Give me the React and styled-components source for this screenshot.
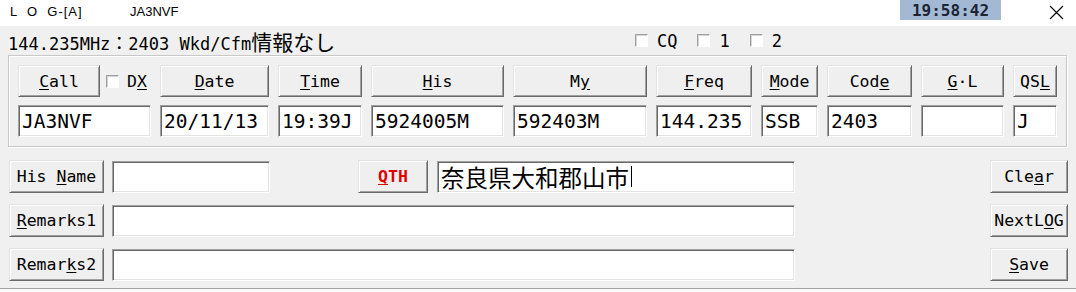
import React from "react";
import styled, { createGlobalStyle } from "styled-components";

const MONO = `"DejaVu Sans Mono", "Noto Sans CJK JP", monospace`;

const Global = createGlobalStyle`
  html, body { margin: 0; padding: 0; background: #f0f0f0; overflow: hidden; }
  * { box-sizing: border-box; }
`;

const Window = styled.div`
  width: 1076px;
  height: 292px;
  display: flex;
  flex-direction: column;
  background: #f0f0f0;
  color: #000;
`;

const TitleBar = styled.header`
  height: 26px;
  flex: none;
  background: #fff;
  display: flex;
  align-items: flex-start;
  padding-right: 5px;
`;

const AppTitle = styled.span`
  width: 120px;
  margin: 4px 0 0 10px;
  font-family: "Liberation Sans", sans-serif;
  font-size: 13px;
  letter-spacing: 1px;
  white-space: pre;
`;

const CallSign = styled.span`
  margin-top: 4px;
  font-family: "Liberation Sans", sans-serif;
  font-size: 13px;
`;

const Spacer = styled.div`
  flex: 1;
`;

const Clock = styled.div`
  width: 101px;
  height: 20px;
  background: #a2b8d3;
  display: flex;
  align-items: center;
  justify-content: center;
  font-family: ${MONO};
  font-weight: 700;
  font-size: 16px;
  color: #1c2433;
`;

const CloseBtn = styled.div`
  width: 30px;
  height: 24px;
  margin-left: 40px;
  display: flex;
  align-items: center;
  justify-content: center;
`;

const InfoRow = styled.div`
  height: 29px;
  flex: none;
  display: flex;
  align-items: center;
  padding-left: 8px;
`;

const InfoText = styled.div`
  width: 627px;
  font-family: ${MONO};
  font-size: 17px;
  white-space: pre;
`;

const Jp = styled.span`
  font-family: "Noto Sans CJK JP", sans-serif;
  font-size: ${(p) => p.$size || 21}px;
`;

const CheckGroup = styled.div`
  display: flex;
  align-items: center;
  gap: 20px;
`;

const CheckItem = styled.div`
  display: flex;
  align-items: center;
  gap: ${(p) => p.$gap ?? 9}px;
  font-family: ${MONO};
  font-size: ${(p) => p.$size || 17}px;
  white-space: pre;
  u { text-underline-offset: 2px; }
`;

const Box = styled.span`
  width: 13px;
  height: 13px;
  flex: none;
  background: #fff;
  border: 1px solid;
  border-color: #a0a0a0 #fff #fff #a0a0a0;
  box-shadow: inset 1px 1px 0 #d4d4d4;
`;

const GroupBox = styled.div`
  margin: 0 9px 0 8px;
  padding: 9px;
  border: 1px solid #c8c8c8;
  box-shadow: inset 1px 1px 0 #fff, 1px 1px 0 #fff;
  display: grid;
  grid-template-columns: 133px 109px 84px 133px 134px 96px 57px 85px 83px 44px;
  grid-template-rows: 32px 32px;
  column-gap: 9px;
  row-gap: 8px;
  flex: none;
`;

const CallCell = styled.div`
  display: flex;
  align-items: center;
  gap: 6px;
`;

const Btn = styled.div`
  width: ${(p) => (p.$w ? `${p.$w}px` : "100%")};
  height: ${(p) => p.$h || 32}px;
  flex: none;
  background: #efefef;
  border: 1px solid;
  border-color: #e3e3e3 #696969 #696969 #e3e3e3;
  box-shadow: inset 1px 1px 0 #fff, inset -1px -1px 0 #a0a0a0;
  display: flex;
  align-items: center;
  justify-content: center;
  font-family: ${MONO};
  font-size: 16.5px;
  font-weight: ${(p) => (p.$red ? 700 : 400)};
  color: ${(p) => (p.$red ? "#e00000" : "#000")};
  white-space: pre;
  u { text-underline-offset: 2px; }
`;

const Field = styled.div`
  width: ${(p) => (p.$w ? `${p.$w}px` : "100%")};
  height: ${(p) => p.$h || 32}px;
  flex: none;
  background: #fff;
  border: 1px solid;
  border-color: #a0a0a0 #fff #fff #a0a0a0;
  box-shadow: inset 1px 1px 0 #696969, inset -1px -1px 0 #e3e3e3;
  padding-left: 3px;
  display: flex;
  align-items: center;
  font-family: ${MONO};
  font-size: 19.5px;
  white-space: pre;
  overflow: hidden;
`;

const Caret = styled.span`
  width: 1px;
  height: 21px;
  margin-left: 2px;
  background: #000;
`;

const Lower = styled.div`
  margin-top: 13px;
  padding: 0 8px 0 9px;
  display: flex;
  justify-content: space-between;
  flex: none;
`;

const Column = styled.div`
  display: flex;
  flex-direction: column;
  gap: 11px;
`;

const Row = styled.div`
  height: 33px;
  display: flex;
  align-items: center;
  gap: 8px;
`;

const QthGroup = styled.div`
  margin-left: 80px;
  display: flex;
  align-items: center;
  gap: 9px;
`;

const Footer = styled.div`
  margin-top: auto;
  height: 4px;
  border-top: 1px solid #a0a0a0;
  background: #fafafa;
`;

const columns = [
  { label: <><u>D</u>ate</>, value: "20/11/13" },
  { label: <><u>T</u>ime</>, value: "19:39J" },
  { label: <><u>H</u>is</>, value: "5924005M" },
  { label: <>M<u>y</u></>, value: "592403M" },
  { label: <><u>F</u>req</>, value: "144.235" },
  { label: <><u>M</u>ode</>, value: "SSB" },
  { label: <>Cod<u>e</u></>, value: "2403" },
  { label: <><u>G</u>·L</>, value: "" },
  { label: <>QS<u>L</u></>, value: "J" },
];

export default function App() {
  return (
    <Window>
      <Global />
      <TitleBar>
        <AppTitle>{"L  O  G-[A]"}</AppTitle>
        <CallSign>JA3NVF</CallSign>
        <Spacer />
        <Clock>19:58:42</Clock>
        <CloseBtn>
          <svg width="15" height="15" viewBox="0 0 15 15">
            <path d="M1 1L14 14M14 1L1 14" stroke="#000" strokeWidth="1.1" fill="none" />
          </svg>
        </CloseBtn>
      </TitleBar>

      <InfoRow>
        <InfoText>
          144.235MHz<Jp $size={18}>：</Jp>2403 Wkd/Cfm<Jp>情報なし</Jp>
        </InfoText>
        <CheckGroup>
          <CheckItem><Box /><span>CQ</span></CheckItem>
          <CheckItem><Box /><span>1</span></CheckItem>
          <CheckItem><Box /><span>2</span></CheckItem>
        </CheckGroup>
      </InfoRow>

      <GroupBox>
        <CallCell>
          <Btn $w={82}><span><u>C</u>all</span></Btn>
          <CheckItem $gap={8} $size={16.5}><Box /><span>D<u>X</u></span></CheckItem>
        </CallCell>
        {columns.map((c, i) => (
          <Btn key={`b${i}`}><span>{c.label}</span></Btn>
        ))}
        <Field>JA3NVF</Field>
        {columns.map((c, i) => (
          <Field key={`f${i}`}>{c.value}</Field>
        ))}
      </GroupBox>

      <Lower>
        <Column>
          <Row>
            <Btn $w={95} $h={33}><span>His <u>N</u>ame</span></Btn>
            <Field $w={158}></Field>
            <QthGroup>
              <Btn $w={70} $h={33} $red><span><u>Q</u>TH</span></Btn>
              <Field $w={358}>
                <Jp $size={23.5}>奈良県大和郡山市</Jp>
                <Caret />
              </Field>
            </QthGroup>
          </Row>
          <Row>
            <Btn $w={95} $h={33}><span><u>R</u>emarks1</span></Btn>
            <Field $w={683}></Field>
          </Row>
          <Row>
            <Btn $w={95} $h={33}><span>Remar<u>k</u>s2</span></Btn>
            <Field $w={683}></Field>
          </Row>
        </Column>
        <Column>
          <Row><Btn $w={78} $h={33}><span>Cle<u>a</u>r</span></Btn></Row>
          <Row><Btn $w={78} $h={33}><span>NextL<u>O</u>G</span></Btn></Row>
          <Row><Btn $w={78} $h={33}><span><u>S</u>ave</span></Btn></Row>
        </Column>
      </Lower>
      <Footer />
    </Window>
  );
}
